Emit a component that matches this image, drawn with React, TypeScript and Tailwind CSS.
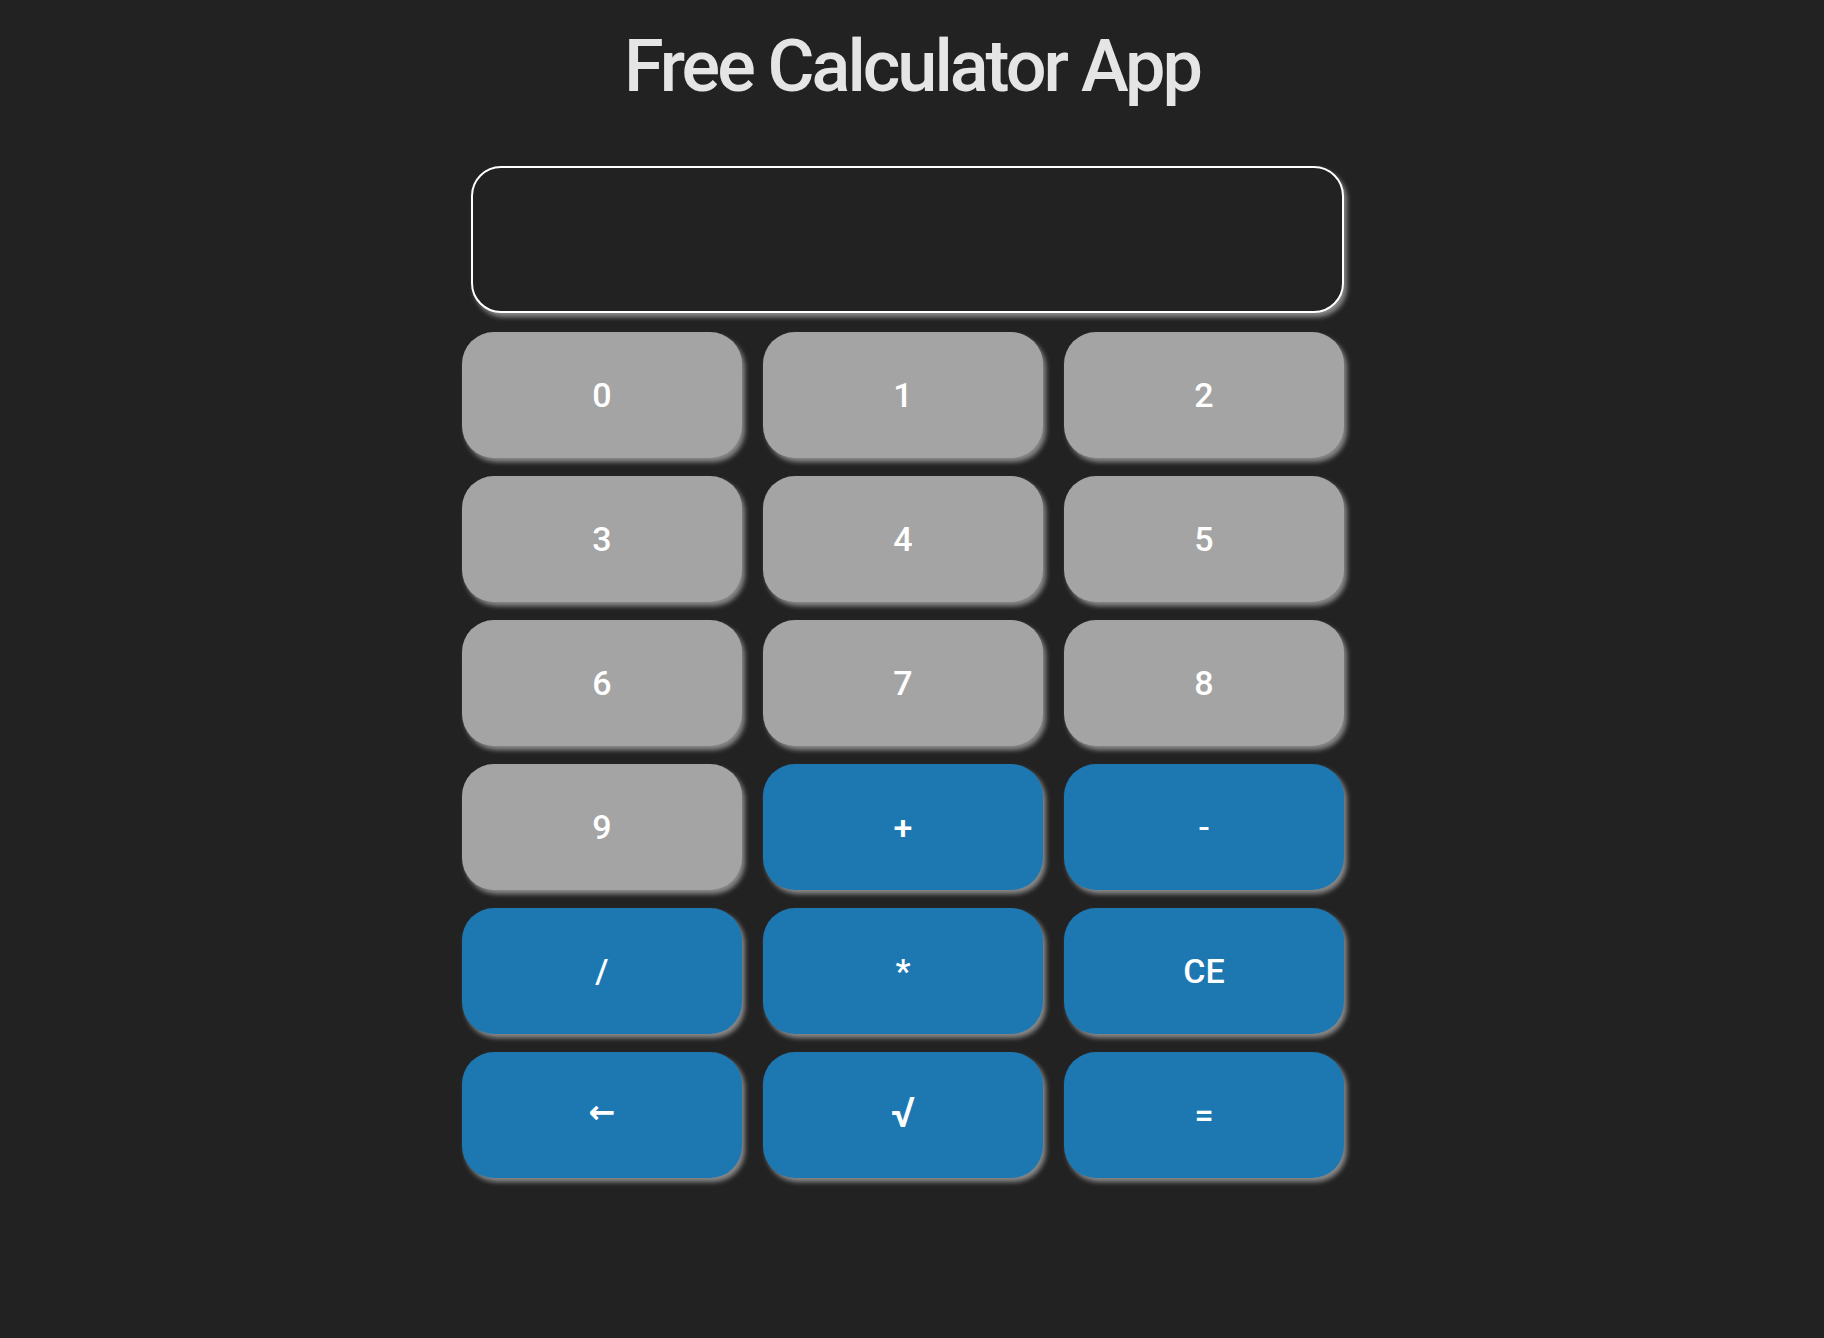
import { useState } from "react";

const keys: { label: string; kind: "num" | "op" }[] = [
  { label: "0", kind: "num" },
  { label: "1", kind: "num" },
  { label: "2", kind: "num" },
  { label: "3", kind: "num" },
  { label: "4", kind: "num" },
  { label: "5", kind: "num" },
  { label: "6", kind: "num" },
  { label: "7", kind: "num" },
  { label: "8", kind: "num" },
  { label: "9", kind: "num" },
  { label: "+", kind: "op" },
  { label: "-", kind: "op" },
  { label: "/", kind: "op" },
  { label: "*", kind: "op" },
  { label: "CE", kind: "op" },
  { label: "←", kind: "op" },
  { label: "√", kind: "op" },
  { label: "=", kind: "op" },
];

export default function App() {
  const [value, setValue] = useState("");

  function press(label: string) {
    if (label === "CE") return setValue("");
    if (label === "←") return setValue((v) => v.slice(0, -1));
    if (label === "√") {
      const n = Number(value);
      return setValue(Number.isNaN(n) ? "" : String(Math.sqrt(n)));
    }
    if (label === "=") {
      try {
        // eslint-disable-next-line no-new-func
        const r = Function(`"use strict"; return (${value || 0})`)();
        return setValue(String(r));
      } catch {
        return setValue("");
      }
    }
    setValue((v) => v + label);
  }

  return (
    <div className="min-h-screen bg-[#222222] pt-[31px] font-['Roboto','Noto_Sans',sans-serif]">
      <h1 className="text-center text-[72px] font-medium leading-none tracking-[-3px] text-[#e5e5e5]">
        Free Calculator App
      </h1>

      <div className="mx-auto mt-[63px] w-[900px]">
        <input
          readOnly
          value={value}
          className="ml-[9px] block h-[147px] w-[873px] rounded-[30px] border-2 border-white bg-[#222222] px-8 text-right text-5xl text-white shadow-[3px_4px_5px_#8a8a8a] outline-none"
        />

        <div className="mt-[19px] grid w-[882px] grid-cols-3 gap-x-[21px] gap-y-[18px]">
          {keys.map((k) => (
            <button
              key={k.label}
              onClick={() => press(k.label)}
              className={`flex h-[126px] items-center justify-center rounded-[32px] text-[34px] font-medium text-white shadow-[3px_4px_5px_#8a8a8a] ${
                k.kind === "num" ? "bg-[#a4a4a4]" : "bg-[#1d78b2]"
              }`}
            >
              {k.label === "←" ? (
                <span className="inline-block -translate-y-[3px] font-['DejaVu_Sans',sans-serif] text-[32px] font-bold">
                  ←
                </span>
              ) : k.label === "√" ? (
                <span className="inline-block -translate-y-[3px] text-[42px]">√</span>
              ) : (
                k.label
              )}
            </button>
          ))}
        </div>
      </div>
    </div>
  );
}
